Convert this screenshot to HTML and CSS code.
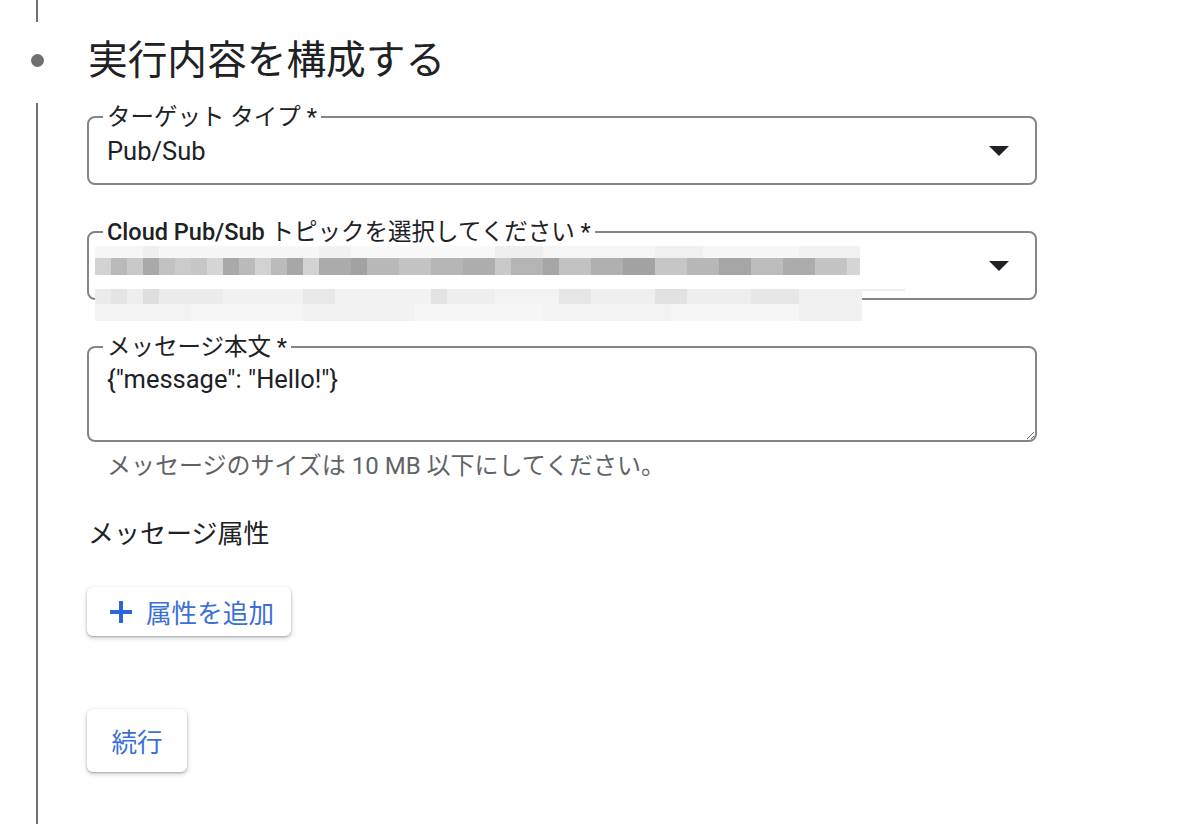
FILE: index.html
```html
<!DOCTYPE html>
<html lang="ja">
<head>
    <meta charset="UTF-8">
    <meta name="viewport" content="width=device-width, initial-scale=1.0">
    <title>実行内容を構成する</title>
    <link rel="stylesheet" href="styles.css">
</head>
<body>
    <div class="stepper">
        <div class="rail">
            <div class="rail-top"></div>
            <div class="rail-dot"></div>
            <div class="rail-line"></div>
        </div>

        <div class="content">
            <h1 class="step-title">実行内容を構成する</h1>

            <fieldset class="field">
                <legend>ターゲット タイプ *</legend>
                <div class="field-row">
                    <span class="field-value">Pub/Sub</span>
                    <span class="caret"></span>
                </div>
            </fieldset>

            <fieldset class="field field-topic">
                <legend><b>Cloud Pub/Sub</b> トピックを選択してください *</legend>
                <div class="field-row">
                    <span class="field-value"></span>
                    <span class="caret"></span>
                </div>
                <!-- blurred topic name -->
                <div class="mosaic">
                    <div class="mosaic-row row-a"></div>
                    <div class="mosaic-row row-b"></div>
                    <div class="mosaic-row row-c"></div>
                    <div class="mosaic-row row-d"></div>
                </div>
            </fieldset>

            <fieldset class="field field-body">
                <legend>メッセージ本文 *</legend>
                <textarea class="body-input">{"message": "Hello!"}</textarea>
            </fieldset>
            <p class="hint">メッセージのサイズは 10 MB 以下にしてください。</p>

            <h2 class="section-title">メッセージ属性</h2>

            <button class="raised-btn add-btn">
                <svg class="plus" width="24" height="24" viewBox="0 0 24 24">
                    <path d="M12 1v22M1 12h22" stroke="currentColor" stroke-width="4" fill="none"/>
                </svg>
                属性を追加
            </button>

            <button class="raised-btn next-btn">続行</button>
        </div>
    </div>
</body>
</html>
```

FILE: styles.css
```css
body {
    margin: 0;
    font-family: Roboto, "Noto Sans CJK JP", sans-serif;
    color: #202124;
    background: #fff;
}
.stepper {
    display: flex;
    min-height: 824px;
}
.rail {
    width: 74px;
    flex-shrink: 0;
    display: flex;
    flex-direction: column;
    align-items: center;
}
.rail-top {
    width: 2px;
    height: 22px;
    background: #707070;
}
.rail-dot {
    width: 13px;
    height: 13px;
    border-radius: 50%;
    background: #707070;
    margin-top: 32px;
}
.rail-line {
    width: 2px;
    flex: 1;
    margin-top: 36px;
    background: #707070;
}
.content {
    width: 950px;
    padding-left: 13px;
}
.step-title {
    margin: 36px 0 0 1px;
    font-size: 39.7px;
    line-height: 50px;
    font-weight: 400;
}
.field {
    position: relative;
    margin: 18px 0 0;
    padding: 6px 26px 17px 18px;
    border: 2px solid #80868b;
    border-radius: 8px;
}
.field legend {
    font-size: 23.5px;
    line-height: 26px;
    padding: 0 4px;
    margin-left: -4px;
}
.field legend b {
    font-weight: 500;
}
.field-topic,
.field-body {
    margin-top: 34px;
}
.field-row {
    display: flex;
    justify-content: space-between;
    align-items: center;
    height: 30px;
}
.field-value {
    font-size: 25.5px;
}
.caret {
    width: 0;
    height: 0;
    border-left: 10px solid transparent;
    border-right: 10px solid transparent;
    border-top: 10px solid #202124;
}
.mosaic {
    position: absolute;
    left: 6px;
    top: 1px;
    width: 816px;
}
.mosaic-row {
    height: 13px;
}
.row-a {
    height: 12px;
    width: 765px;
    background: linear-gradient(90deg,
        #f6f6f6 0 48px, #efefef 48px 64px, #f7f7f7 64px 224px, #f1f1f1 224px 256px,
        #f8f8f8 256px 400px, #efefef 400px 448px, #f5f5f5 448px 560px, #f0f0f0 560px 608px,
        #f7f7f7 608px 704px, #f2f2f2 704px 765px);
}
.row-b {
    height: 17px;
    width: 765px;
    background: linear-gradient(90deg,
        #d2d2d2 0 16px, #b9b9b9 16px 32px, #c9c9c9 32px 48px, #a9a9a9 48px 64px,
        #c2c2c2 64px 80px, #cbcbcb 80px 96px, #c6c6c6 96px 112px, #d6d6d6 112px 128px,
        #a9a9a9 128px 144px, #bababa 144px 160px, #d2d2d2 160px 176px, #bbbbbb 176px 192px,
        #a7a7a7 192px 208px, #d2d2d2 208px 224px, #ababab 224px 256px, #a2a2a2 256px 272px,
        #b8b8b8 272px 304px, #c4c4c4 304px 336px, #b6b6b6 336px 368px, #aeaeae 368px 400px,
        #c9c9c9 400px 416px, #b4b4b4 416px 448px, #a6a6a6 448px 464px, #c2c2c2 464px 496px,
        #b0b0b0 496px 528px, #a3a3a3 528px 560px, #c6c6c6 560px 592px, #b7b7b7 592px 624px,
        #a5a5a5 624px 656px, #bcbcbc 656px 688px, #acacac 688px 720px, #c4c4c4 720px 752px,
        #d6d6d6 752px 765px);
}
.row-c {
    height: 15px;
    width: 767px;
    background: linear-gradient(90deg,
        #ebebeb 0 16px, #e4e4e4 16px 32px, #eeeeee 32px 48px, #dedede 48px 64px,
        #ececec 64px 128px, #f1f1f1 128px 208px, #e8e8e8 208px 240px, #f2f2f2 240px 336px,
        #e3e3e3 336px 352px, #eeeeee 352px 400px, #f3f3f3 400px 464px, #e6e6e6 464px 496px,
        #efefef 496px 560px, #e2e2e2 560px 592px, #eeeeee 592px 656px, #e7e7e7 656px 704px,
        #f0f0f0 704px 767px);
}
.row-d {
    height: 17px;
    width: 767px;
    background: linear-gradient(90deg,
        #f3f3f3 0 96px, #f6f6f6 96px 208px, #f2f2f2 208px 320px, #f7f7f7 320px 448px,
        #f3f3f3 448px 576px, #f6f6f6 576px 704px, #f1f1f1 704px 767px);
}
.row-c::after {
    content: "";
    display: block;
    margin-left: 767px;
    width: 43px;
    height: 2px;
    margin-top: 14px;
    background: #ededed;
}
.field-body {
    padding: 4px 0 0 0;
}
.field-body legend {
    margin-left: 14px;
}
.body-input {
    display: block;
    box-sizing: border-box;
    width: 100%;
    height: 76px;
    margin: 0;
    padding: 0 0 0 18px;
    border: none;
    outline: none;
    resize: vertical;
    font-family: Roboto, "Noto Sans CJK JP", sans-serif;
    font-size: 25.5px;
    line-height: 30px;
    color: #202124;
    background: transparent;
}
.hint {
    margin: 9px 0 0 20px;
    font-size: 24px;
    line-height: 30px;
    color: #5f6368;
}
.section-title {
    margin: 35px 0 0 1px;
    font-size: 26px;
    line-height: 36px;
    font-weight: 400;
}
.raised-btn {
    display: flex;
    align-items: center;
    background: #fff;
    border: none;
    border-radius: 6px;
    box-shadow: 0 1px 2px rgba(60, 64, 67, 0.3), 0 2px 5px rgba(60, 64, 67, 0.25);
    font-family: Roboto, "Noto Sans CJK JP", sans-serif;
    font-size: 25.6px;
    color: #3a6fd8;
    cursor: pointer;
}
.add-btn {
    margin-top: 35px;
    height: 49px;
    width: 204px;
    padding: 0 0 0 22px;
    gap: 13px;
}
.plus {
    color: #2d66d8;
    flex-shrink: 0;
}
.next-btn {
    margin-top: 73px;
    height: 63px;
    width: 100px;
    justify-content: center;
    padding: 0;
}
```
